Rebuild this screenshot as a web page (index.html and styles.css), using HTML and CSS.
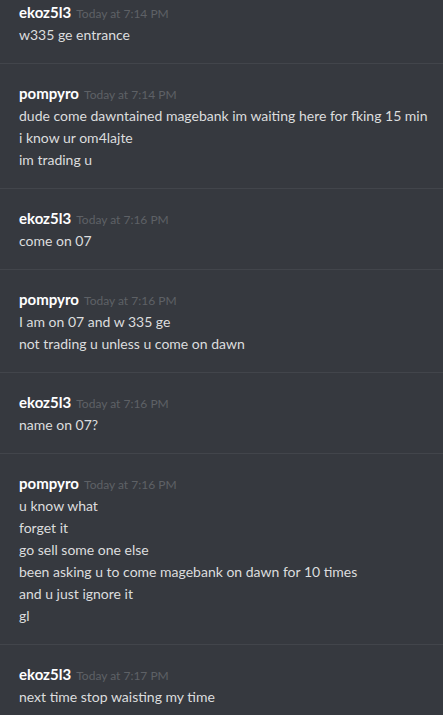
FILE: index.html
```html
<!DOCTYPE html>
<html lang="en">
<head>
    <meta charset="UTF-8">
    <meta name="viewport" content="width=device-width, initial-scale=1.0">
    <title>Chat</title>
    <link rel="stylesheet" href="styles.css">
</head>
<body>
    <div class="chat">
        <div class="message message-first">
            <div class="header"><span class="username">ekoz5l3</span> <span class="timestamp">Today at 7:14 PM</span></div>
            <div class="line">w335 ge entrance</div>
        </div>
        <div class="message">
            <div class="header"><span class="username">pompyro</span> <span class="timestamp">Today at 7:14 PM</span></div>
            <div class="line">dude come dawntained magebank im waiting here for fking 15 min</div>
            <div class="line">i know ur om4lajte</div>
            <div class="line">im trading u</div>
        </div>
        <div class="message">
            <div class="header"><span class="username">ekoz5l3</span> <span class="timestamp">Today at 7:16 PM</span></div>
            <div class="line">come on 07</div>
        </div>
        <div class="message">
            <div class="header"><span class="username">pompyro</span> <span class="timestamp">Today at 7:16 PM</span></div>
            <div class="line">I am on 07 and w 335 ge</div>
            <div class="line">not trading u unless u come on dawn</div>
        </div>
        <div class="message">
            <div class="header"><span class="username">ekoz5l3</span> <span class="timestamp">Today at 7:16 PM</span></div>
            <div class="line">name on 07?</div>
        </div>
        <div class="message">
            <div class="header"><span class="username">pompyro</span> <span class="timestamp">Today at 7:16 PM</span></div>
            <div class="line">u know what</div>
            <div class="line">forget it</div>
            <div class="line">go sell some one else</div>
            <div class="line">been asking u to come magebank on dawn for 10 times</div>
            <div class="line">and u just ignore it</div>
            <div class="line">gl</div>
        </div>
        <div class="message message-last">
            <div class="header"><span class="username">ekoz5l3</span> <span class="timestamp">Today at 7:17 PM</span></div>
            <div class="line">next time stop waisting my time</div>
        </div>
    </div>
</body>
</html>
```

FILE: styles.css
```css
:root {
    --background-color: #36393f;
    --divider-color: #42454b;
    --name-color: #ffffff;
    --text-color: #dcddde;
    --muted-color: #5e6166;
}
html, body {
    height: 100%;
}
body {
    font-family: Lato, 'Open Sans', sans-serif;
    margin: 0;
    background-color: var(--background-color);
    color: var(--text-color);
    overflow: hidden;
}
.chat {
    display: flex;
    flex-direction: column;
}
.message {
    padding: 18px 4px 17px 19px;
    border-bottom: 1px solid var(--divider-color);
}
.message-first {
    padding-top: 1px;
}
.message-last {
    border-bottom: none;
}
.header {
    height: 22px;
    line-height: 22px;
    margin-bottom: 1px;
    white-space: nowrap;
}
.username {
    font-size: 15px;
    font-weight: 700;
    color: var(--name-color);
    margin-right: 1px;
}
.timestamp {
    font-size: 12px;
    color: var(--muted-color);
}
.line {
    font-size: 14px;
    line-height: 22px;
    height: 22px;
    white-space: nowrap;
}
```
